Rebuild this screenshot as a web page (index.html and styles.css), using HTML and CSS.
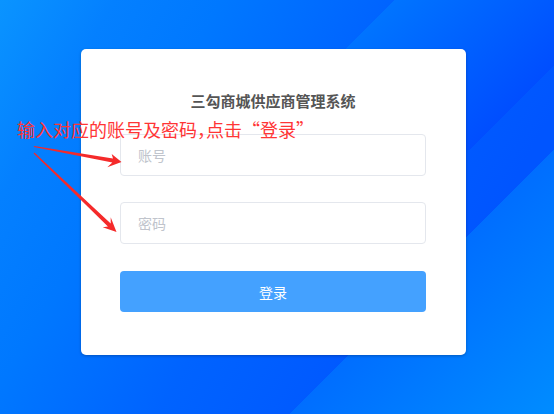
FILE: index.html
```html
<!doctype html>
<html lang="zh-CN">
	<head>
		<meta charset="utf-8">
		<title>三勾商城供应商管理系统</title>
		<link rel="stylesheet" href="styles.css">
	</head>

	<body>
		<div class="login-card">
			<h2 class="login-title">三勾商城供应商管理系统</h2>
			<div class="login-field">
				<input class="login-input" type="text" placeholder="账号">
			</div>
			<div class="login-field last">
				<input class="login-input" type="password" placeholder="密码">
			</div>
			<button class="login-btn">登录</button>
		</div>

		<!-- annotation drawn over the screenshot -->
		<div class="tip-text">输入对应的账号及密码<span class="half">，</span>点击“登录”</div>
		<svg class="tip-arrows" width="554" height="414" viewBox="0 0 554 414">
			<polygon points="34.1,145.9 113,158.5 111.7,154 121.5,162 107.3,167.3 112.3,162.4 33.9,147.1"></polygon>
			<polygon points="34.4,152.6 110.7,223.6 110.7,217.3 116.5,232 102.7,227.3 107.9,226.5 33.6,153.4"></polygon>
		</svg>
	</body>
</html>
```

FILE: styles.css
```css
html, body {
	margin: 0;
	height: 414px;
	overflow: hidden;
}
body {
	position: relative;
	box-sizing: border-box;
	padding: 49px 0 0 81px;
	font-family: "Noto Sans CJK SC", "Noto Sans", sans-serif;
	background:
		linear-gradient(135deg, transparent 56%, #0074ff 56%, #004eff 88%, transparent 88%) 0 0 / 554px 150px no-repeat,
		linear-gradient(135deg, transparent 72.7%, #006eff 72.7%, #008cff 100%),
		linear-gradient(120deg, #0a94ff 0%, #0480ff 14.5%, #0078ff 28%, #0063ff 50%, #0055ff 78%, #0055ff 100%);
}

.login-card {
	width: 385px;
	box-sizing: border-box;
	padding: 41px 40px 43px 39px;
	background: #fff;
	border-radius: 5px;
	box-shadow: 0 1px 3px rgba(0, 0, 0, 0.25);
}
.login-title {
	margin: 0 0 22px;
	font-size: 15px;
	line-height: 22px;
	font-weight: bold;
	color: #555;
	text-align: center;
}
.login-field {
	margin-bottom: 26px;
}
.login-field.last {
	margin-bottom: 27px;
}
.login-input {
	display: block;
	width: 100%;
	height: 42px;
	box-sizing: border-box;
	padding: 0 17px;
	border: 1px solid #e4e7ed;
	border-radius: 4px;
	font-family: inherit;
	font-size: 14px;
	color: #606266;
	outline: none;
}
.login-input::placeholder {
	color: #c0c4cc;
}
.login-btn {
	display: block;
	width: 100%;
	height: 41px;
	border: none;
	border-radius: 4px;
	background: #44a1ff;
	color: #fff;
	font-family: inherit;
	font-size: 14px;
	cursor: pointer;
}

.tip-text {
	position: absolute;
	left: 17px;
	top: 116px;
	font-size: 18px;
	line-height: 26px;
	color: #ff3535;
	white-space: nowrap;
}
.tip-text .half {
	font-feature-settings: "halt";
}
.tip-arrows {
	position: absolute;
	left: 0;
	top: 0;
	pointer-events: none;
}
.tip-arrows polygon {
	fill: #f52a2a;
}
```
